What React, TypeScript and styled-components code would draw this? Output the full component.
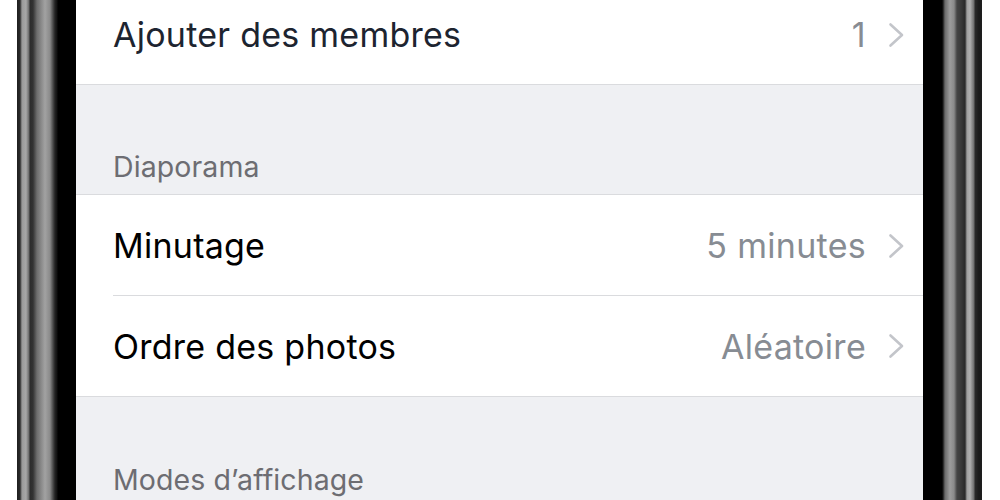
import React from "react";
import styled, { createGlobalStyle } from "styled-components";

const Global = createGlobalStyle`
  html, body { margin: 0; padding: 0; background: #ffffff; }
  body { font-family: Inter, "Noto Sans", sans-serif; -webkit-font-smoothing: antialiased; }
`;

const Stage = styled.div`
  display: flex;
  width: 1000px;
  height: 500px;
  overflow: hidden;
  background: #ffffff;
`;

const Margin = styled.div<{ $w: number }>`
  width: ${(p) => p.$w}px;
  flex: none;
  background: #ffffff;
`;

const Bezel = styled.div<{ $side: "left" | "right" }>`
  width: 59px;
  flex: none;
  background: ${(p) =>
    p.$side === "left"
      ? `linear-gradient(90deg,
          #1e1e1e 0px, #2a2a2a 3px, #9a9a9a 5px, #a8a8a8 9px, #6a6a6a 12px,
          #2c2c2c 13px, #333 16px, #6e6e6e 20px, #a2a2a2 28px, #8a8a8a 33px,
          #4a4a4a 36px, #222 38px, #111 40px, #000 41px, #000 59px)`
      : `linear-gradient(90deg,
          #000 0px, #000 19px, #1a1a1a 20px, #6a6a6a 22px, #9c9c9c 27px,
          #8a8a8a 31px, #444 34px, #3a3a3a 38px, #2a2a2a 42px, #a0a0a0 44px,
          #b0b0b0 47px, #6c6c6c 51px, #2a2a2a 52px, #1a1a1a 56px, #1e1e1e 59px)`};
`;

const Screen = styled.div`
  flex: 1;
  display: flex;
  flex-direction: column;
  background: #eff0f3;
`;

const Group = styled.div`
  background: #ffffff;
  border-bottom: 1px solid #dadbde;
`;

const GroupTop = styled(Group)`
  border-top: 1px solid #dadbde;
`;

const Row = styled.div<{ $height: number; $shift?: number; $inset?: boolean }>`
  height: ${(p) => p.$height}px;
  box-sizing: border-box;
  display: flex;
  align-items: center;
  padding: 0 18px ${(p) => p.$shift ?? 0}px 37px;
  position: relative;
  ${(p) =>
    p.$inset
      ? `&::after {
          content: "";
          position: absolute;
          left: 37px;
          right: 0;
          bottom: 0;
          height: 1px;
          background: #dadbde;
        }`
      : ""}
`;

const Label = styled.span<{ $dark?: boolean }>`
  flex: 1;
  font-size: 34px;
  letter-spacing: 0.25px;
  color: ${(p) => (p.$dark ? "#1d2430" : "#000000")};
`;

const Value = styled.span`
  font-size: 34px;
  letter-spacing: 0.3px;
  color: #878c93;
  margin-right: 22px;
`;

const Chevron = () => (
  <svg width="17" height="26" viewBox="0 0 17 26">
    <polyline
      points="2.5,2.5 14,13 2.5,23.5"
      fill="none"
      stroke="#c3c5ca"
      strokeWidth="2.6"
      strokeLinecap="round"
      strokeLinejoin="round"
    />
  </svg>
);

const Header = styled.div<{ $height: number; $pad: number }>`
  height: ${(p) => p.$height}px;
  box-sizing: border-box;
  display: flex;
  align-items: flex-end;
  padding: 0 37px ${(p) => p.$pad}px;
  font-size: 28.5px;
  color: #6d6d72;
  letter-spacing: 0.1px;
`;

export default function App() {
  return (
    <>
      <Global />
      <Stage>
        <Margin $w={17} />
        <Bezel $side="left" />
        <Screen>
          <Group>
            <Row $height={84} $shift={15}>
              <Label $dark>Ajouter des membres</Label>
              <Value>1</Value>
              <Chevron />
            </Row>
          </Group>
          <Header $height={109} $pad={10}>Diaporama</Header>
          <GroupTop>
            <Row $height={101} $inset>
              <Label>Minutage</Label>
              <Value>5 minutes</Value>
              <Chevron />
            </Row>
            <Row $height={100}>
              <Label>Ordre des photos</Label>
              <Value>Aléatoire</Value>
              <Chevron />
            </Row>
          </GroupTop>
          <Header $height={103} $pad={3}>Modes d’affichage</Header>
        </Screen>
        <Bezel $side="right" />
        <Margin $w={18} />
      </Stage>
    </>
  );
}
